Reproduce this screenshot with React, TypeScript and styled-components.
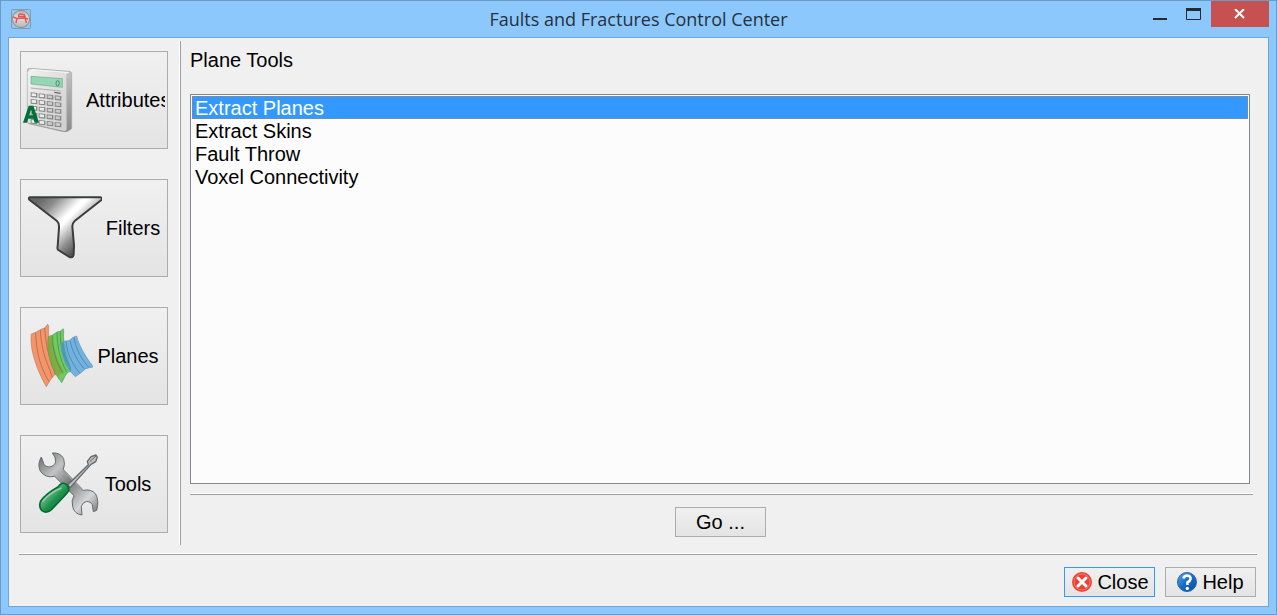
import React, { useState } from "react";
import styled, { createGlobalStyle, css } from "styled-components";

const GlobalStyle = createGlobalStyle`
  *, *::before, *::after { box-sizing: border-box; }
  body {
    margin: 0;
    font-family: "Liberation Sans", Arial, sans-serif;
    font-size: 20px;
    line-height: 23px;
    color: #000;
  }
  button { font: inherit; color: inherit; }
`;

const Window = styled.main`
  display: flex;
  flex-direction: column;
  min-height: 100vh;
  padding: 0 7px 7px;
  border: 1px solid #6b9ac6;
  background: #8dc8fc;
`;

const TitleBar = styled.header`
  display: grid;
  grid-template-columns: 1fr auto 1fr;
  height: 36px;
`;

const AppIcon = styled.svg`
  width: 20px;
  height: 20px;
  margin: 8px 3px;
`;

const Title = styled.h1`
  margin: 0;
  font-family: "Open Sans", "Noto Sans", sans-serif;
  font-size: 18px;
  font-weight: 400;
  line-height: 36px;
  color: #26313b;
`;

const WindowControls = styled.div`
  display: flex;
  justify-content: flex-end;
  align-items: flex-start;
`;

const WindowButton = styled.button<{ $close?: boolean }>`
  display: flex;
  align-items: center;
  justify-content: center;
  width: ${(p) => (p.$close ? 58 : 34)}px;
  height: 26px;
  padding: 0;
  border: 0;
  background: ${(p) => (p.$close ? "#c75050" : "transparent")};
`;

const Client = styled.div`
  display: flex;
  flex: 1;
  flex-direction: column;
  padding: 3px 10px 9px;
  border: 1px solid #73a6d6;
  background: #f0f0f0;
`;

const Body = styled.div`
  display: flex;
  flex: 1;
  margin-bottom: 8px;
`;

const Sidebar = styled.nav`
  display: flex;
  flex-direction: column;
  gap: 30px;
  width: 162px;
  padding: 10px 12px 12px 1px;
  border-right: 1px solid #a0a0a0;
  box-shadow: inset -1px 0 #fff;
`;

const buttonFace = css`
  display: flex;
  align-items: center;
  justify-content: center;
  border: 1px solid #acacac;
  background: linear-gradient(#f0f0f0, #e4e4e4);
`;

const CategoryButton = styled.button`
  ${buttonFace}
  gap: 4px;
  width: 148px;
  height: 98px;
  padding: 0 2px;
`;

const CategoryIcon = styled.svg`
  flex: none;
  height: 64px;
`;

const CategoryLabel = styled.span`
  min-width: 0;
  overflow: hidden;
  white-space: nowrap;
`;

const Panel = styled.section`
  display: flex;
  flex: 1;
  flex-direction: column;
  min-width: 0;
  padding: 8px 5px 8px 9px;
`;

const PanelTitle = styled.h2`
  margin: 0 0 22px;
  font-size: 20px;
  font-weight: 400;
`;

const ToolList = styled.ul`
  flex: 1;
  margin: 0 3px 9px 0;
  padding: 1px;
  border: 1px solid #828790;
  background: #fcfcfc;
  list-style: none;
`;

const ToolItem = styled.li<{ $selected: boolean }>`
  height: 23px;
  padding: 1px 3px 0;
  outline: ${(p) => (p.$selected ? "1px dotted #b08060" : "none")};
  outline-offset: -1px;
  background: ${(p) => (p.$selected ? "#3399ff" : "transparent")};
  color: ${(p) => (p.$selected ? "#fff" : "#000")};
  cursor: default;
`;

const Separator = styled.hr`
  width: 100%;
  height: 2px;
  margin: 0;
  border: 0;
  border-top: 1px solid #fff;
  background: #a0a0a0;
`;

const ActionButton = styled.button<{ $primary?: boolean }>`
  ${buttonFace}
  gap: 5px;
  width: 91px;
  height: 30px;
  padding: 0;
  border-color: ${(p) => (p.$primary ? "#3399ff" : "#acacac")};
`;

const PanelActions = styled.div`
  display: flex;
  justify-content: center;
  padding: 12px 2px 0 0;
`;

const Footer = styled.footer`
  display: flex;
  justify-content: flex-end;
  gap: 10px;
  padding: 12px 2px 0;
`;

const FooterSeparator = styled(Separator)`
  width: auto;
  margin-right: 1px;
`;

function CalculatorIcon() {
  const rows = [0, 1, 2, 3, 4];
  const cols = [0, 1, 2, 3];
  return (
    <CategoryIcon width="59" viewBox="27 69 177 192" aria-hidden="true">
      <defs>
        <linearGradient id="calcFace" x1="0" y1="0" x2="1" y2="1">
          <stop offset="0" stopColor="#f2f2f2" />
          <stop offset=".5" stopColor="#dedede" />
          <stop offset="1" stopColor="#cfcfcf" />
        </linearGradient>
        <linearGradient id="calcSide" x1="0" y1="0" x2="0" y2="1">
          <stop offset="0" stopColor="#c4c4c4" />
          <stop offset="1" stopColor="#8a8a8a" />
        </linearGradient>
      </defs>
      <path d="M40 75Q41 70 47 70L166 79Q173 80 173 86V249Q173 252 169 254L158 260Q154 262 148 260L44 236Q40 234 40 228Z" fill="url(#calcSide)" stroke="#a2a2a2" strokeWidth="2" />
      <path d="M41 81Q42 77 48 77L152 85Q157 86 157 91L158 253Q157 259 150 258L45 234Q41 233 41 227Z" fill="url(#calcFace)" />
      <path d="M45 74L56 72L167 81L157 87L150 84L46 78Z" fill="#f3f3f3" />
      <path d="M51 94L145 101V127L51 117Z" fill="#93d8b0" stroke="#74a788" strokeWidth="2" />
      <ellipse cx="131" cy="115" rx="5" ry="8" fill="none" stroke="#4b8a65" strokeWidth="3" />
      <path d="M50 129L140 138" stroke="#b0b0b0" strokeWidth="3" />
      <path d="M121 142L140 145" stroke="#666" strokeWidth="4" />
      {rows.map((r) =>
        cols.map((c) => (
          <g key={`${r}-${c}`} transform={`translate(${50 + c * 24} ${142 + r * 20 + c * 3})`}>
            <path d="M0 0L20 2V16L0 14Z" fill="#888" />
            <path d="M3 3L16 4V12L3 11Z" fill={c < 2 ? "#eee" : "#c9c9c9"} />
          </g>
        ))
      )}
      <path d="M27 233L44 182H58L75 233H62L58 221H43L39 233ZM46 211H56L51 194Z" fill="#006f38" fillRule="evenodd" />
    </CategoryIcon>
  );
}

function FunnelIcon() {
  return (
    <CategoryIcon width="74" viewBox="39 72 222 192" aria-hidden="true">
      <defs>
        <linearGradient id="funnelMetal" gradientUnits="userSpaceOnUse" x1="75" y1="80" x2="205" y2="210">
          <stop offset="0" stopColor="#666" />
          <stop offset=".2" stopColor="#8c8c8c" />
          <stop offset=".5" stopColor="#fff" />
          <stop offset=".56" stopColor="#fff" />
          <stop offset=".82" stopColor="#909090" />
          <stop offset="1" stopColor="#555" />
        </linearGradient>
      </defs>
      <path d="M45 76H255Q264 77 259 84L178 148Q172 154 172 163L177 220L176 248Q174 259 163 255L130 234Q126 231 128 223L132 168Q133 153 126 147L44 84Q38 78 45 76Z" fill="url(#funnelMetal)" stroke="#3b3d3d" strokeWidth="6" strokeLinejoin="round" />
    </CategoryIcon>
  );
}

function PlanesIcon() {
  return (
    <CategoryIcon width="64" viewBox="45 72 192 192" aria-hidden="true">
      <g strokeLinejoin="round" strokeWidth="2">
        <path d="M52 102L65 97L81 88L92 84L101 73L104 78C102 103 106 135 114 164C119 185 123 205 128 222L120 226L109 240L97 260C80 230 63 193 54 149C51 130 50 113 52 102Z" fill="#f59468" stroke="#ba8069" />
        <path d="M65 98C66 136 72 172 85 205Q94 228 105 245M79 90C81 131 89 166 104 201L115 232M92 84C94 123 101 159 114 193L124 224" fill="none" stroke="#9c6148" />
        <path d="M103 110L116 105L129 96L139 94L147 86L149 91C147 117 151 141 159 165C165 186 169 203 171 214L163 216L155 225L143 248C128 229 113 203 107 175C102 154 100 126 103 110Z" fill="#5fc451" fillOpacity=".88" stroke="#5b9c53" />
        <path d="M103 111C101 133 105 165 115 195L132 232L139 223L150 214Q120 164 114 109Z" fill="#8a9d31" fillOpacity=".6" />
        <path d="M116 106C115 147 124 182 147 220M129 98C130 145 139 180 158 216M139 94C138 141 147 177 167 211" fill="none" stroke="#408346" />
        <path d="M142 127L155 123L165 122L177 112L188 108C191 123 202 147 216 169C225 185 235 194 237 201L226 203L214 207L200 219L184 230C168 216 154 194 148 171Q140 149 142 127Z" fill="#68acdc" fillOpacity=".92" stroke="#6797b9" />
        <path d="M143 129Q141 154 152 179L170 214L171 202Q153 166 149 126Z" fill="#328e95" fillOpacity=".58" />
        <path d="M156 124C159 160 174 191 197 219M168 121C174 153 189 181 211 207M180 112C185 146 201 177 225 202" fill="none" stroke="#3b78a4" />
      </g>
    </CategoryIcon>
  );
}

function ToolsIcon() {
  return (
    <CategoryIcon width="64" viewBox="69 72 192 192" aria-hidden="true">
      <defs>
        <linearGradient id="toolMetal" x1="0" y1="0" x2="1" y2="1">
          <stop offset="0" stopColor="#5f6467" />
          <stop offset=".28" stopColor="#c2c4c5" />
          <stop offset=".5" stopColor="#74787a" />
          <stop offset=".78" stopColor="#d5d6d7" />
          <stop offset="1" stopColor="#696d6f" />
        </linearGradient>
        <linearGradient id="toolHandle" x1="0" y1="0" x2="1" y2="1">
          <stop offset="0" stopColor="#087337" />
          <stop offset=".35" stopColor="#5fb680" />
          <stop offset=".55" stopColor="#1f8f4c" />
          <stop offset="1" stopColor="#00682c" />
        </linearGradient>
      </defs>
      <path d="M82 87L90 109Q97 119 111 116Q125 111 125 99Q125 87 115 75Q139 73 149 92Q154 108 148 125L208 187Q231 182 245 198Q256 219 248 247L238 251L235 230Q230 220 218 220Q206 222 202 235L204 261Q182 259 176 236Q171 218 180 203L122 145Q95 151 79 130Q69 108 82 87Z" fill="url(#toolMetal)" stroke="#686b6c" strokeWidth="3" strokeLinejoin="round" />
      <path d="M148 128L207 188" stroke="#9a9d9e" strokeWidth="5" />
      <path d="M160 172L223 110L220 100L231 86L246 81L250 87L245 101L231 109L169 178Z" fill="#bfc0c1" stroke="#65696b" strokeWidth="4" strokeLinejoin="round" />
      <path d="M227 101L246 84" stroke="#65696b" strokeWidth="3" />
      <path d="M139 169Q149 162 158 170Q168 180 163 190L154 201L113 244Q99 258 84 248Q73 237 80 219Q96 197 133 176Z" fill="url(#toolHandle)" stroke="#036b32" strokeWidth="5" />
      <path d="M87 219Q107 194 141 181" fill="none" stroke="#8fd0a5" strokeWidth="5" strokeLinecap="round" />
    </CategoryIcon>
  );
}

const categories = [
  { name: "Attributes", Icon: CalculatorIcon },
  { name: "Filters", Icon: FunnelIcon },
  { name: "Planes", Icon: PlanesIcon },
  { name: "Tools", Icon: ToolsIcon },
];

const tools = ["Extract Planes", "Extract Skins", "Fault Throw", "Voxel Connectivity"];

export default function App() {
  const [selected, setSelected] = useState(tools[0]);

  return (
    <>
      <GlobalStyle />
      <Window>
        <TitleBar>
          <AppIcon viewBox="0 0 20 20" aria-hidden="true">
            <defs>
              <linearGradient id="appBall" x1="0" y1="0" x2="0" y2="1">
                <stop offset="0" stopColor="#b4b4b4" />
                <stop offset=".4" stopColor="#dedede" />
                <stop offset="1" stopColor="#b8b8b8" />
              </linearGradient>
            </defs>
            <rect x=".5" y=".5" width="19" height="19" rx="1" fill="#94c3ea" stroke="#829caf" />
            <circle cx="10" cy="10" r="8.5" fill="url(#appBall)" stroke="#8d8d8d" />
            <path d="M2 8L6 9.5L14 9L17 10M7 6.5L9 5L13 5.5L14 7.5L7 7.5M6 9L5 14M14 9L15.5 14" fill="none" stroke="#ea5552" strokeWidth="1.5" />
          </AppIcon>
          <Title>Faults and Fractures Control Center</Title>
          <WindowControls>
            <WindowButton aria-label="Minimize">
              <svg width="14" height="12" aria-hidden="true"><path d="M0 11H14" stroke="#272b30" strokeWidth="2" /></svg>
            </WindowButton>
            <WindowButton aria-label="Maximize">
              <svg width="16" height="12" aria-hidden="true"><path d="M.5 0V11.5H14.5V0" fill="none" stroke="#272b30" /><path d="M0 1.5H15" stroke="#272b30" strokeWidth="3" /></svg>
            </WindowButton>
            <WindowButton $close aria-label="Close window">
              <svg width="12" height="10" aria-hidden="true"><path d="M1 0L10 9M10 0L1 9" stroke="#fff" strokeWidth="2" /></svg>
            </WindowButton>
          </WindowControls>
        </TitleBar>
        <Client>
          <Body>
            <Sidebar aria-label="Categories">
              {categories.map(({ name, Icon }) => (
                <CategoryButton key={name} type="button">
                  <Icon />
                  <CategoryLabel>{name}</CategoryLabel>
                </CategoryButton>
              ))}
            </Sidebar>
            <Panel>
              <PanelTitle id="panel-title">Plane Tools</PanelTitle>
              <ToolList role="listbox" aria-labelledby="panel-title">
                {tools.map((tool) => (
                  <ToolItem
                    key={tool}
                    role="option"
                    aria-selected={tool === selected}
                    $selected={tool === selected}
                    onClick={() => setSelected(tool)}
                  >
                    {tool}
                  </ToolItem>
                ))}
              </ToolList>
              <Separator />
              <PanelActions>
                <ActionButton type="button">Go ...</ActionButton>
              </PanelActions>
            </Panel>
          </Body>
          <FooterSeparator />
          <Footer>
            <ActionButton type="button" $primary>
              <svg width="22" height="22" viewBox="0 0 22 22" aria-hidden="true">
                <circle cx="12" cy="11" r="10" fill="#ea4335" />
                <circle cx="12" cy="11" r="8" fill="none" stroke="#f47a6d" />
                <path d="M8 7L16 15M16 7L8 15" stroke="#fff" strokeWidth="3" strokeLinecap="round" />
              </svg>
              Close
            </ActionButton>
            <ActionButton type="button">
              <svg width="20" height="20" viewBox="0 0 20 20" aria-hidden="true">
                <defs>
                  <linearGradient id="helpBall" x1="0" y1="0" x2="1" y2="1">
                    <stop offset="0" stopColor="#58a8e8" />
                    <stop offset=".5" stopColor="#176bc5" />
                    <stop offset="1" stopColor="#0c4da2" />
                  </linearGradient>
                </defs>
                <circle cx="10" cy="10" r="9.5" fill="url(#helpBall)" stroke="#2867a8" strokeWidth="1" />
                <path d="M6.5 6.5Q7 3.5 10.5 3.5Q14 4 13.5 7Q13.2 9 10.5 10.5V13" fill="none" stroke="#fff" strokeWidth="2.6" />
                <circle cx="10.3" cy="16.4" r="1.6" fill="#fff" />
              </svg>
              Help
            </ActionButton>
          </Footer>
        </Client>
      </Window>
    </>
  );
}
